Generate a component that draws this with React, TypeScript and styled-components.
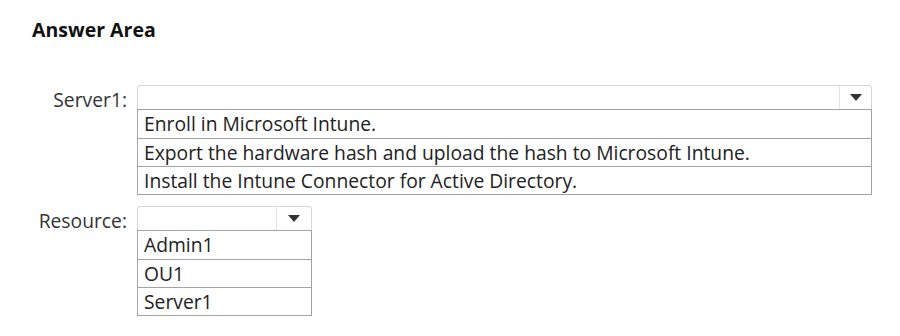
import React from 'react';
import styled, { createGlobalStyle } from 'styled-components';

const GlobalStyle = createGlobalStyle`
  html, body {
    margin: 0;
    padding: 0;
    background: #fff;
  }
  body {
    font-family: 'Open Sans', 'Noto Sans', sans-serif;
    color: #222;
  }
`;

const Page = styled.div`
  width: 900px;
  height: 336px;
  padding: 17px 0 0 32px;
  box-sizing: border-box;
`;

const Title = styled.h1`
  margin: 0;
  font-size: 19.5px;
  font-weight: 700;
  line-height: 26px;
  color: #111;
`;

const Form = styled.div`
  display: grid;
  grid-template-columns: 93px auto;
  column-gap: 12px;
  row-gap: 11px;
  margin-top: 42px;
  align-items: start;
`;

const Label = styled.div`
  text-align: right;
  font-size: 19.3px;
  line-height: 24px;
  padding-top: 3px;
  margin-right: -2px;
  color: #333;
  white-space: nowrap;
`;

const Field = styled.div<{ $width: number }>`
  display: flex;
  flex-direction: column;
  width: ${({ $width }) => $width}px;
`;

const Select = styled.div<{ $arrow: number }>`
  display: grid;
  grid-template-columns: 1fr ${({ $arrow }) => $arrow}px;
  height: 24px;
  box-sizing: border-box;
  border: 1px solid #d6d6d6;
  border-bottom: none;
  border-radius: 4px 4px 0 0;
`;

const Arrow = styled.div`
  display: flex;
  align-items: center;
  justify-content: center;
  border-left: 1px solid #e2e2e2;

  &::after {
    content: '';
    width: 0;
    height: 0;
    border-left: 6px solid transparent;
    border-right: 6px solid transparent;
    border-top: 7px solid #333;
  }
`;

const List = styled.ul`
  margin: 0;
  padding: 0;
  list-style: none;
  border: 1px solid #a2a2a2;
`;

const Option = styled.li`
  height: 28px;
  box-sizing: border-box;
  padding-left: 6px;
  font-size: 19.3px;
  line-height: 27px;
  color: #222;
  white-space: nowrap;

  & + & {
    border-top: 1px solid #a2a2a2;
  }
`;

const questions = [
  {
    label: 'Server1:',
    width: 735,
    arrow: 32,
    options: [
      'Enroll in Microsoft Intune.',
      'Export the hardware hash and upload the hash to Microsoft Intune.',
      'Install the Intune Connector for Active Directory.',
    ],
  },
  {
    label: 'Resource:',
    width: 175,
    arrow: 35,
    options: ['Admin1', 'OU1', 'Server1'],
  },
];

export default function App() {
  return (
    <Page>
      <GlobalStyle />
      <Title>Answer Area</Title>
      <Form>
        {questions.map((q) => (
          <React.Fragment key={q.label}>
            <Label>{q.label}</Label>
            <Field $width={q.width}>
              <Select $arrow={q.arrow}>
                <span />
                <Arrow />
              </Select>
              <List>
                {q.options.map((o) => (
                  <Option key={o}>{o}</Option>
                ))}
              </List>
            </Field>
          </React.Fragment>
        ))}
      </Form>
    </Page>
  );
}
